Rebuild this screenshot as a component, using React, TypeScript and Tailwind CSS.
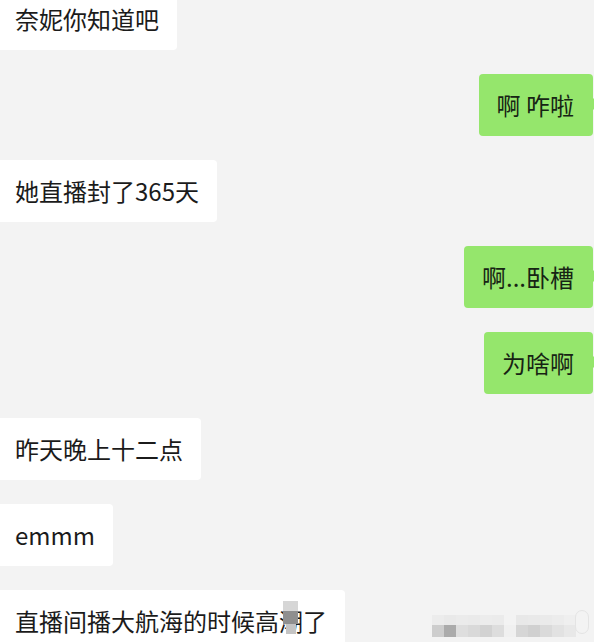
import React from "react";

const Left = ({ children }: { children: React.ReactNode }) => (
  <div className="flex justify-start">
    <div className="relative bg-white rounded-r-[4px] pl-[15px] pr-[18px] py-[19px] text-[24px] leading-[24px] text-[#1b1b1b] whitespace-nowrap">
      {children}
    </div>
  </div>
);

const Right = ({ children }: { children: React.ReactNode }) => (
  <div className="flex justify-end pr-[1px]">
    <div className="relative bg-[#95e66c] rounded-[4px] pl-[18px] pr-[19px] py-[19px] text-[24px] leading-[24px] text-[#172414] whitespace-nowrap">
      {children}
      <div className="absolute right-[-6px] top-[24px] w-0 h-0 border-y-[6px] border-y-transparent border-l-[6px] border-l-[#95e66c]" />
    </div>
  </div>
);

const wmTop = ["#ececec", "#e9e9e9", "#ebebeb", "#eaeaea", "#ececec", "#ebebeb", "#f3f3f3", "#e8e8e8", "#e9e9e9", "#eaeaea", "#ececec", "#efefef"];
const wmBot = ["#cdcdcd", "#ababab", "#dedede", "#d9d9d9", "#d2d2d2", "#dddddd", "#f0f0f0", "#d6d6d6", "#d0d0d0", "#dadada", "#e2e2e2", "#e8e8e8"];

export default function App() {
  return (
    <div className="relative w-[594px] h-[642px] overflow-hidden bg-[#f3f3f3] font-['Noto_Sans_CJK_SC',sans-serif]">
      <div className="flex flex-col gap-[24px] -mt-[12px]">
        <Left>奈妮你知道吧</Left>
        <Right>啊 咋啦</Right>
        <Left>她直播封了365天</Left>
        <Right>啊...卧槽</Right>
        <Right>为啥啊</Right>
        <Left>昨天晚上十二点</Left>
        <Left>emmm</Left>
        <Left>
          <span className="relative">
            直播间播大航海的时候高潮了
            <span className="absolute left-[268px] top-[-2px] w-[15px] h-[10px] bg-[#d6d6d6]" />
            <span className="absolute left-[268px] top-[8px] w-[15px] h-[13px] bg-[#8f8f8f]" />
            <span className="absolute left-[271px] top-[21px] w-[10px] h-[10px] bg-[#c4c4c4]" />
          </span>
        </Left>
      </div>
      <div className="absolute left-[432px] top-[615px] flex flex-col">
        <div className="flex">
          {wmTop.map((c, i) => (
            <div key={i} className="w-[12px] h-[10px]" style={{ background: c }} />
          ))}
        </div>
        <div className="flex">
          {wmBot.map((c, i) => (
            <div key={i} className="w-[12px] h-[12px]" style={{ background: c }} />
          ))}
        </div>
      </div>
      <div className="absolute left-[575px] top-[610px] w-[14px] h-[24px] rounded-full border border-[#e4e4e4]" />
    </div>
  );
}
